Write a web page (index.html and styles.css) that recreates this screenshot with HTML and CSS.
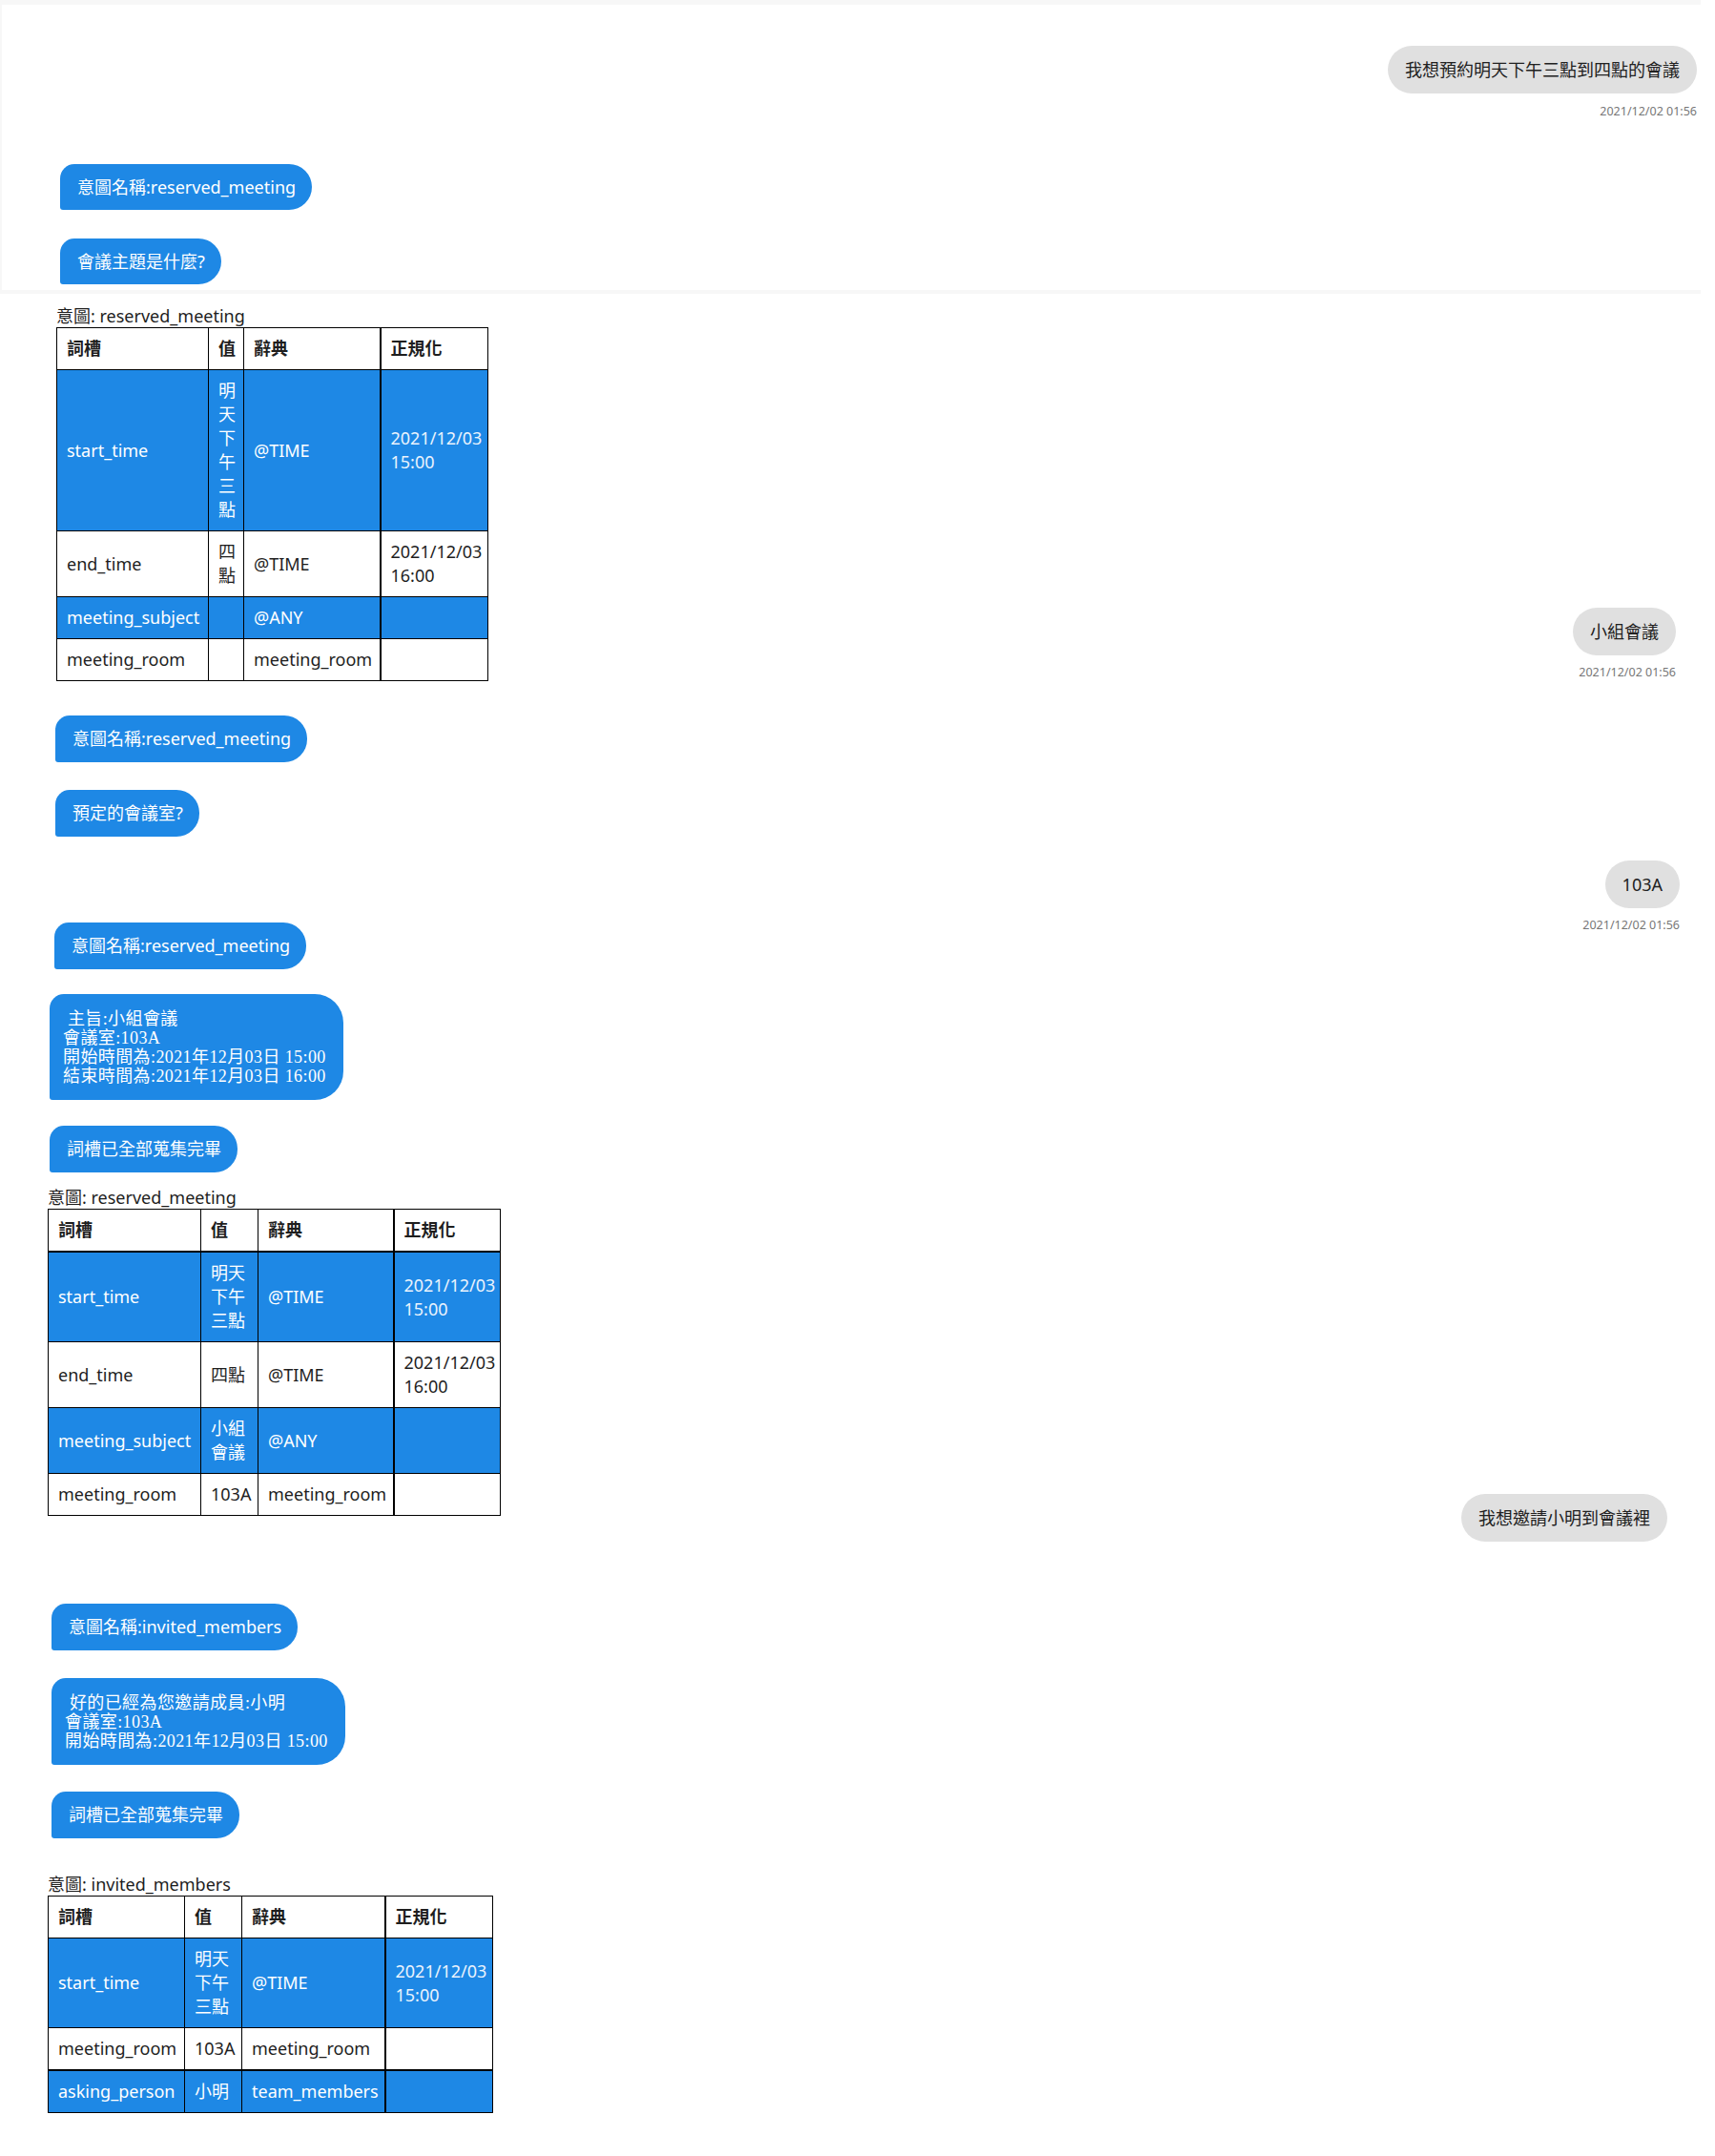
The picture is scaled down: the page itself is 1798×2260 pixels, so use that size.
FILE: index.html
```html
<!DOCTYPE html>
<html lang="zh-Hant">
<head>
<meta charset="utf-8">
<title>會議預約聊天紀錄</title>
<link rel="stylesheet" href="styles.css">
</head>
<body>
<div class="page">
  <section class="panel">
    <div class="msg-user">
      <div class="bubble user">我想預約明天下午三點到四點的會議</div>
      <div class="time">2021/12/02 01:56</div>
    </div>
    <div class="bubble bot small b1">意圖名稱:reserved_meeting</div>
    <div class="bubble bot small b2">會議主題是什麼?</div>
  </section>

  <div class="row r1">
    <div class="table-block">
      <div class="intent-label">意圖: reserved_meeting</div>
      <table class="slots t1">
        <colgroup><col class="c1"><col class="c2"><col class="c3"><col class="c4"></colgroup>
        <thead>
          <tr><th>詞槽</th><th>值</th><th>辭典</th><th class="norm">正規化</th></tr>
        </thead>
        <tbody>
          <tr class="filled"><td>start_time</td><td>明天下午三點</td><td>@TIME</td><td class="norm date">2021/12/03 15:00</td></tr>
          <tr><td>end_time</td><td>四點</td><td>@TIME</td><td class="norm date">2021/12/03 16:00</td></tr>
          <tr class="filled"><td>meeting_subject</td><td></td><td>@ANY</td><td class="norm"></td></tr>
          <tr><td>meeting_room</td><td></td><td>meeting_room</td><td class="norm"></td></tr>
        </tbody>
      </table>
    </div>
    <div class="msg-user">
      <div class="bubble user">小組會議</div>
      <div class="time">2021/12/02 01:56</div>
    </div>
  </div>

  <div class="bubble bot b3">意圖名稱:reserved_meeting</div>
  <div class="bubble bot b4">預定的會議室?</div>

  <div class="msg-user solo r103">
    <div class="bubble user">103A</div>
    <div class="time">2021/12/02 01:56</div>
  </div>

  <div class="bubble bot b5">意圖名稱:reserved_meeting</div>
  <div class="bubble bot multi b6"> 主旨:小組會議<br>會議室:103A<br>開始時間為:2021年12月03日 15:00<br>結束時間為:2021年12月03日 16:00</div>
  <div class="bubble bot b7">詞槽已全部蒐集完畢</div>

  <div class="row r2">
    <div class="table-block">
      <div class="intent-label">意圖: reserved_meeting</div>
      <table class="slots t2">
        <colgroup><col class="c1"><col class="c2"><col class="c3"><col class="c4"></colgroup>
        <thead>
          <tr class="head-thick"><th>詞槽</th><th>值</th><th>辭典</th><th class="norm">正規化</th></tr>
        </thead>
        <tbody>
          <tr class="filled"><td>start_time</td><td>明天下午三點</td><td>@TIME</td><td class="norm date">2021/12/03 15:00</td></tr>
          <tr><td>end_time</td><td>四點</td><td>@TIME</td><td class="norm date">2021/12/03 16:00</td></tr>
          <tr class="filled"><td>meeting_subject</td><td>小組會議</td><td>@ANY</td><td class="norm"></td></tr>
          <tr><td>meeting_room</td><td>103A</td><td>meeting_room</td><td class="norm"></td></tr>
        </tbody>
      </table>
    </div>
    <div class="msg-user low">
      <div class="bubble user">我想邀請小明到會議裡</div>
    </div>
  </div>

  <div class="bubble bot b8">意圖名稱:invited_members</div>
  <div class="bubble bot multi b9"> 好的已經為您邀請成員:小明<br>會議室:103A<br>開始時間為:2021年12月03日 15:00</div>
  <div class="bubble bot b10">詞槽已全部蒐集完畢</div>

  <div class="row r3">
    <div class="table-block">
      <div class="intent-label">意圖: invited_members</div>
      <table class="slots t3">
        <colgroup><col class="c1"><col class="c2"><col class="c3"><col class="c4"></colgroup>
        <thead>
          <tr><th>詞槽</th><th>值</th><th>辭典</th><th class="norm">正規化</th></tr>
        </thead>
        <tbody>
          <tr class="filled"><td>start_time</td><td>明天下午三點</td><td>@TIME</td><td class="norm date">2021/12/03 15:00</td></tr>
          <tr class="sep-thick"><td>meeting_room</td><td>103A</td><td>meeting_room</td><td class="norm"></td></tr>
          <tr class="filled"><td>asking_person</td><td>小明</td><td>team_members</td><td class="norm"></td></tr>
        </tbody>
      </table>
    </div>
  </div>
</div>
</body>
</html>
```

FILE: styles.css
```css
* { box-sizing: border-box; }

html, body {
  margin: 0;
  padding: 0;
  background: #ffffff;
}

body {
  font-family: "Noto Sans", "Noto Sans CJK TC", sans-serif;
  color: #222222;
}

.page {
  width: 1798px;
  min-height: 2260px;
  display: flex;
  flex-direction: column;
  align-items: flex-start;
}

/* top chat panel */
.panel {
  width: 1783px;
  border-top: 5px solid #f7f7f7;
  border-left: 2px solid #f7f7f7;
  border-bottom: 4px solid #f7f7f7;
  padding: 43px 4px 6px 61px;
  display: flex;
  flex-direction: column;
  align-items: flex-start;
}

.panel .msg-user {
  align-self: stretch;
}

/* bubbles */
.bubble {
  display: inline-block;
  white-space: nowrap;
}

.bubble.bot {
  background: #1e88e5;
  color: #ffffff;
  font-size: 18px;
  line-height: 25px;
  padding: 12px 17px 12px 18px;
  border-radius: 15px 24px 24px 3px;
}

.bubble.bot.small {
  line-height: 24px;
}

.bubble.bot.multi {
  white-space: pre;
  font-family: "Liberation Serif", "Noto Sans CJK TC", serif;
  font-size: 18px;
  line-height: 20px;
  letter-spacing: 0.4px;
  padding: 16px 18px 15px 14px;
  border-radius: 15px 30px 30px 3px;
}

.bubble.user {
  background: #e0e0e0;
  color: #212121;
  font-size: 18px;
  line-height: 24px;
  padding: 13px 18px;
  border-radius: 25px;
}

.msg-user {
  display: flex;
  flex-direction: column;
  align-items: flex-end;
}

.time {
  margin-top: 9px;
  font-size: 12.5px;
  line-height: 18px;
  color: #777777;
}

.panel .time { margin-top: 10px; }

/* bubble placement */
.b1 { margin-top: 46px; }
.b2 { margin-top: 30px; }
.b3 { margin-top: 36px; margin-left: 58px; }
.b4 { margin-top: 29px; margin-left: 58px; }
.b5 { margin-left: 57px; }
.b6 { margin-top: 26px; margin-left: 52px; }
.b7 { margin-top: 27px; margin-left: 52px; }
.b8 { margin-top: 92px; margin-left: 54px; }
.b9 { margin-top: 29px; margin-left: 54px; }
.b10 { margin-top: 28px; margin-left: 54px; }

.msg-user.solo {
  align-self: stretch;
}

.r103 {
  margin-top: 25px;
  margin-bottom: -12px;
  padding-right: 37px;
}

/* rows with tables */
.row {
  align-self: stretch;
  display: flex;
  justify-content: space-between;
  align-items: flex-end;
}

.r1 { margin-top: 12px; padding-left: 59px; padding-right: 41px; }
.r2 { margin-top: 15px; padding-left: 50px; padding-right: 50px; }
.r3 { margin-top: 37px; padding-left: 50px; }

.msg-user.low { margin-bottom: -27px; }

.intent-label {
  font-size: 18px;
  line-height: 22px;
  margin-bottom: 1px;
  color: #1e1e1e;
  white-space: nowrap;
}

/* tables */
.slots {
  border-collapse: collapse;
  table-layout: fixed;
  font-size: 18px;
  line-height: 25px;
  color: #1e1e1e;
}

.slots th,
.slots td {
  border: 1px solid #000000;
  padding: 9px 10px;
  text-align: left;
  vertical-align: middle;
  overflow: visible;
}

.slots th {
  font-weight: 700;
}

.slots .norm {
  border-left: 2px solid #000000;
}

.slots tr.filled td {
  background: #1e88e5;
  color: #ffffff;
}

.slots tr.filled td.date {
  color: #eaf3fd;
}

.slots tr.head-thick th {
  border-bottom: 2px solid #000000;
}

.slots tr.sep-thick td {
  border-bottom: 2px solid #000000;
}

.t1 { width: 452px; }
.t1 .c1 { width: 159px; }
.t1 .c2 { width: 37px; }
.t1 .c3 { width: 143px; }
.t1 .c4 { width: 113px; }

.t2 { width: 474px; }
.t2 .c1 { width: 160px; }
.t2 .c2 { width: 60px; }
.t2 .c3 { width: 142px; }
.t2 .c4 { width: 112px; }

.t3 { width: 466px; }
.t3 .c1 { width: 143px; }
.t3 .c2 { width: 60px; }
.t3 .c3 { width: 150px; }
.t3 .c4 { width: 113px; }
```
